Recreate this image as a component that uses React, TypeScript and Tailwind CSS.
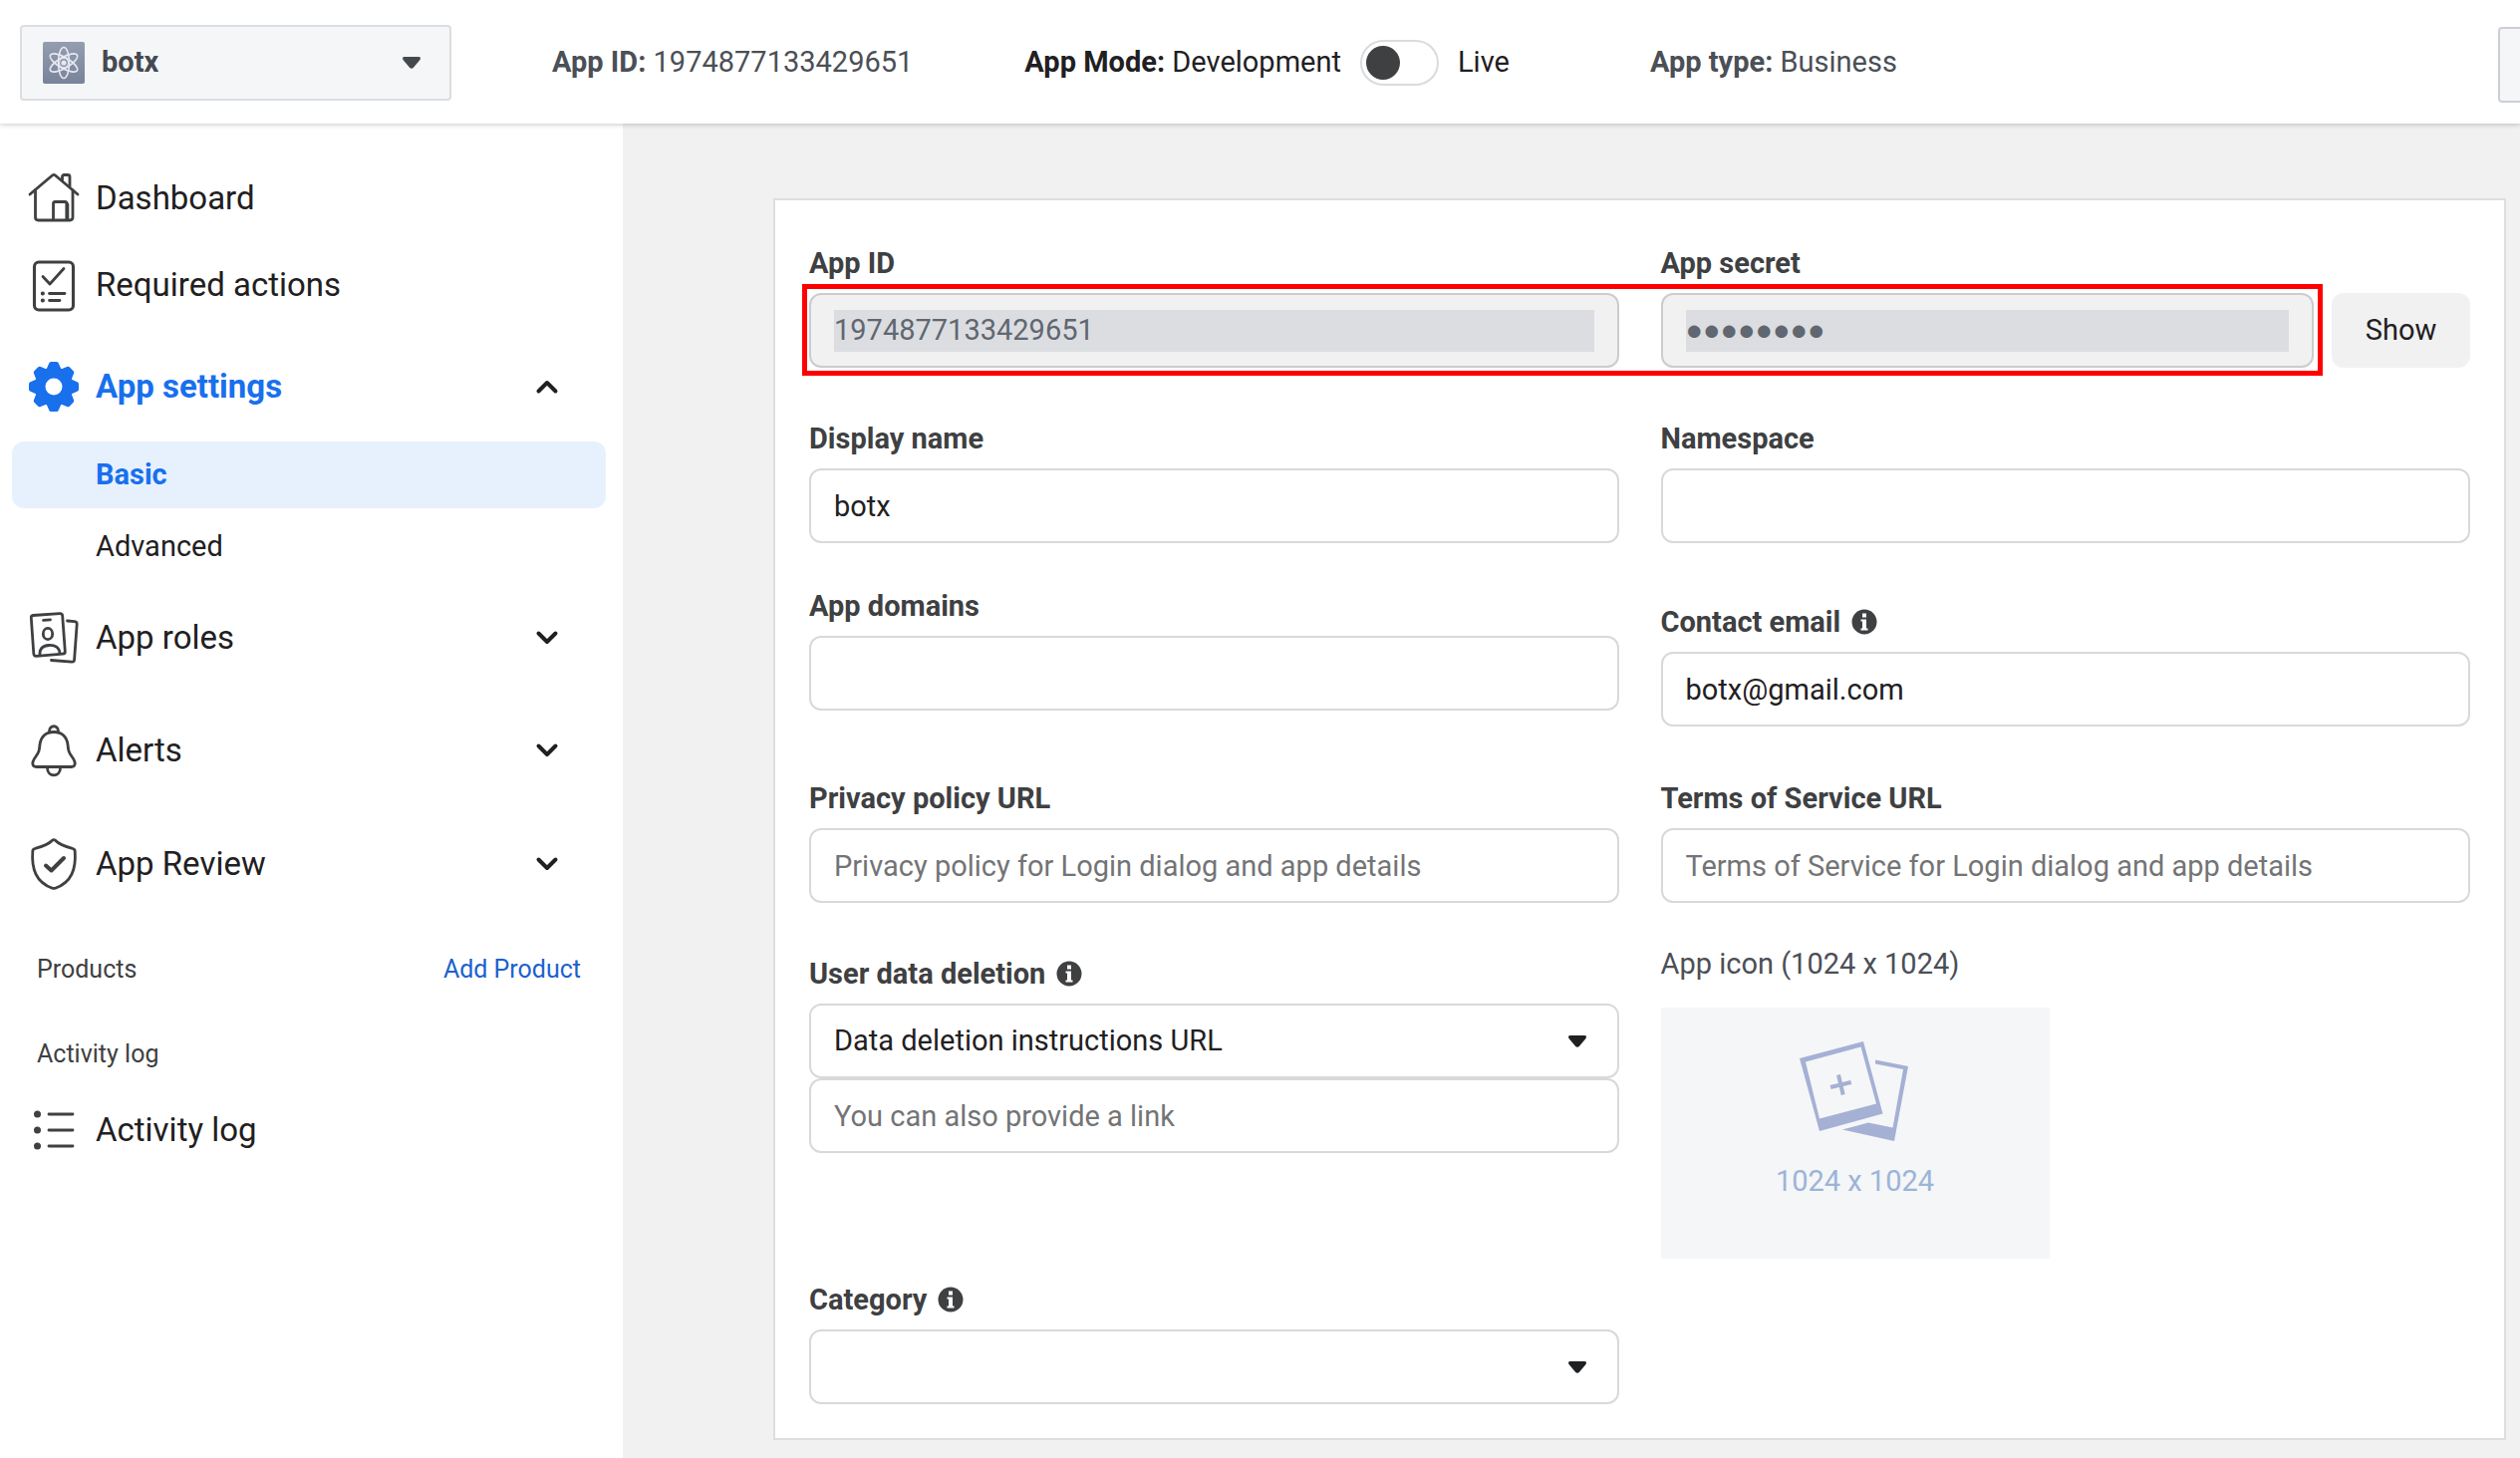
import React from "react";

const ink = "#3e4042";

function AtomIcon() {
  return (
    <svg viewBox="0 0 42 42" className="size-[42px] shrink-0" aria-hidden="true">
      <defs>
        <linearGradient id="atomBg" x1="0" y1="0" x2="0" y2="1">
          <stop offset="0" stopColor="#949db0" />
          <stop offset="1" stopColor="#78829a" />
        </linearGradient>
      </defs>
      <rect width="42" height="42" rx="2" fill="url(#atomBg)" />
      <g fill="none" stroke="#e6e9f0" strokeWidth="1.6">
        <ellipse cx="21" cy="21" rx="5.5" ry="15.5" />
        <ellipse cx="21" cy="21" rx="5.5" ry="15.5" transform="rotate(60 21 21)" />
        <ellipse cx="21" cy="21" rx="5.5" ry="15.5" transform="rotate(120 21 21)" />
        <circle cx="21" cy="21" r="4.5" strokeWidth="1.2" />
      </g>
      <circle cx="21" cy="21" r="2.6" fill="#e6e9f0" />
    </svg>
  );
}

function Icon({ children }: { children: React.ReactNode }) {
  return (
    <svg
      viewBox="0 0 54 54"
      className="size-[54px] shrink-0"
      fill="none"
      stroke={ink}
      strokeWidth="2.8"
      strokeLinecap="round"
      strokeLinejoin="round"
      aria-hidden="true"
    >
      {children}
    </svg>
  );
}

const HouseIcon = () => (
  <Icon>
    <path d="M3 23 25.500 4Q27 2.800 28.500 4L51 23" />
    <path d="M8.500 19V46Q8.500 49 11.500 49H43Q46 49 46 46V19" />
    <path d="M35.500 9V5.500Q35.500 3.500 37.500 3.500H41Q43 3.500 43 5.500V15" />
    <path d="M26.500 48V32.500Q26.500 30.500 28.500 30.500H38Q40 30.500 40 32.500V48" />
    <path d="M40.500 33V48" strokeWidth="3.600" />
  </Icon>
);

const ChecklistIcon = () => (
  <Icon>
    <rect x="7.500" y="4" width="39" height="48" rx="4.500" strokeWidth="3.100" />
    <path d="M16 18.500 23 26 37 10.500" />
    <path d="M22.500 35.500H38M22.500 42.500H33" />
    <path d="M15.700 35.500h.3M15.700 42.500h.3" strokeWidth="3.800" />
  </Icon>
);

const GearIcon = () => (
  <svg viewBox="-27 -27 54 54" className="size-[54px] shrink-0" aria-hidden="true">
    <g fill="#1870ed">
      {[0, 45, 90, 135, 180, 225, 270, 315].map((a) => (
        <path
          key={a}
          transform={`rotate(${a})`}
          d="M-8.500 -15 L-4.800 -23.500 Q-4.300 -25 -2.800 -25 H2.800 Q4.300 -25 4.800 -23.500 L8.500 -15 Z"
        />
      ))}
    </g>
    <circle r="14" fill="none" stroke="#1870ed" strokeWidth="11" />
  </svg>
);

const RolesIcon = () => (
  <Icon>
    <path d="M6 4.500 33 2.600Q35.500 2.500 35.700 5L38.300 40.500Q38.500 43 36 43.200L9.500 45.300Q7 45.500 6.800 43L4.300 7Q4.200 4.700 6 4.500Z" />
    <path d="M40.500 10 48 10.700Q50.300 11 50.200 13.200L47.600 49Q47.400 51.300 45 51.200L24.500 49.500" />
    <path d="M16.500 9.300 23.500 8.800" />
    <ellipse cx="21" cy="23" rx="4.700" ry="5.600" />
    <path d="M13 44.500C12.500 38 15.500 35 22 34.500S32.500 37 33 42.500" />
  </Icon>
);

const BellIcon = () => (
  <Icon>
    <path d="M22.500 8C22.500 1 31.500 1 31.500 8" />
    <path d="M27 8.500C18.500 8.500 14 14 13 21C12.300 27 12.500 28 9 33C6 37 5.500 38 5.800 40.500C6 42.800 7 43.500 9.500 43.500H44.500C47 43.500 48 42.800 48.200 40.500C48.500 38 48 37 45 33C41.500 28 41.700 27 41 21C40 14 35.500 8.500 27 8.500Z" />
    <path d="M20.500 44.500C20.500 54.300 33.500 54.300 33.500 44.500" />
  </Icon>
);

const ShieldIcon = () => (
  <Icon>
    <path d="M25.500 3.200Q27 2.200 28.500 3.200C33 8 39 9.500 46 11.500Q48 12 48.200 14C49.500 32 45 45 28.500 51.200Q27 51.700 25.500 51.200C9 45 4.500 32 5.800 14Q6 12 8 11.500C15 9.500 21 8 25.500 3.200Z" />
    <path d="M19 28.500 24.500 33.500 37 21" strokeWidth="4" />
  </Icon>
);

const ListIcon = () => (
  <Icon>
    <path d="M22 11H46M22 27H46M22 43H46" />
    <g fill={ink} stroke="none">
      <circle cx="10.500" cy="11" r="3.500" />
      <circle cx="10.500" cy="27" r="3.500" />
      <circle cx="10.500" cy="43" r="3.500" />
    </g>
  </Icon>
);

function Chevron({ up = false }: { up?: boolean }) {
  return (
    <svg viewBox="0 0 24 24" className="size-6" fill="none" stroke="#1f2022" strokeWidth="4" strokeLinecap="round" strokeLinejoin="round" aria-hidden="true">
      <path d={up ? "M3.500 16.500 12 8l8.500 8.500" : "M3.500 7.500 12 16l8.500-8.500"} />
    </svg>
  );
}

function Caret() {
  return (
    <svg viewBox="0 0 20 14" className="h-[14px] w-5" aria-hidden="true">
      <path d="M3 1H17Q20 1 18.500 4L12 11.700Q10 14 8 11.700L1.500 4Q0 1 3 1Z" fill="currentColor" />
    </svg>
  );
}

function InfoIcon() {
  return (
    <svg viewBox="0 0 26 26" className="size-[26px]" aria-hidden="true">
      <circle cx="13" cy="13" r="12.500" fill={ink} />
      <path d="M11 4.500h4v4h-4zM9.500 10.500H15v9h1.500v2h-7v-2H11v-7H9.500z" fill="#fff" />
    </svg>
  );
}

function PhotosIcon() {
  return (
    <svg viewBox="0 0 112 102" className="h-[102px] w-[112px]" aria-hidden="true">
      <path d="M76 19.500 109 26 95 101 43 89.500 69 82.500 93.500 87.500 104 29 76 23.500Z" fill="#a5b0d5" />
      <path fillRule="evenodd" d="M0 18 64 1 83.500 73.500 20 91ZM6 21.500 20 78.500 77 63.500 61.500 6.500Z" fill="#a5b0d5" />
      <path d="M39 34.500 43.700 54.500M31 47 51.700 42" stroke="#a5b0d5" strokeWidth="4" />
    </svg>
  );
}

const field =
  "h-[75px] w-full rounded-[12px] border-2 border-[#d8d9db] bg-white px-[23px] text-[29px] text-[#1f2022] placeholder:text-[#737476] outline-none";

function Label({ htmlFor, children, info = false }: { htmlFor: string; children: string; info?: boolean }) {
  return (
    <div className="mb-3 flex h-9 items-center gap-[11px]">
      <label htmlFor={htmlFor} className="text-[29px] leading-9 font-bold text-[#3e4042]">
        {children}
      </label>
      {info && (
        <button type="button" aria-label={`About ${children}`}>
          <InfoIcon />
        </button>
      )}
    </div>
  );
}

function TextField({ id, label, info, value, placeholder, className = "" }: {
  id: string;
  label: string;
  info?: boolean;
  value?: string;
  placeholder?: string;
  className?: string;
}) {
  return (
    <div className={className}>
      <Label htmlFor={id} info={info}>{label}</Label>
      <input id={id} type="text" defaultValue={value} placeholder={placeholder} className={field} />
    </div>
  );
}

function SelectBox({ id, options }: { id: string; options: string[] }) {
  return (
    <div className="relative">
      <select id={id} className={`${field} block appearance-none`}>
        {options.map((o) => (
          <option key={o}>{o}</option>
        ))}
      </select>
      <span className="pointer-events-none absolute inset-y-0 right-8 flex items-center text-[#1f2022]">
        <Caret />
      </span>
    </div>
  );
}

const locked = "flex h-[75px] min-w-0 flex-1 items-center rounded-[12px] border-2 border-[#cbccce] bg-[#f1f1f1] px-[23px]";
const lockedInput = "h-[42px] w-full min-w-0 bg-[#dcdde1] text-[29px] text-[#606770] outline-none";

function NavLink({ icon, children, className = "" }: { icon: React.ReactNode; children: string; className?: string }) {
  return (
    <a href="#" className={`flex h-[54px] items-center gap-[15px] pl-[27px] text-[33px] text-[#1f2022] ${className}`}>
      {icon}
      {children}
    </a>
  );
}

function NavGroup({ icon, children, open = false, className = "" }: {
  icon: React.ReactNode;
  children: string;
  open?: boolean;
  className?: string;
}) {
  return (
    <button
      type="button"
      aria-expanded={open}
      className={`flex h-[54px] items-center gap-[15px] pr-16 pl-[27px] text-left text-[33px] ${open ? "font-bold text-[#1870ed]" : "text-[#1f2022]"} ${className}`}
    >
      {icon}
      <span className="flex-1">{children}</span>
      <Chevron up={open} />
    </button>
  );
}

export default function App() {
  return (
    <div className="flex min-h-screen flex-col overflow-hidden bg-[#f1f1f1] font-[Roboto,sans-serif]">
      <header className="relative z-10 flex h-[124px] items-center bg-white pt-[2px] pl-5 text-[29px] shadow-[0_1px_5px_rgba(0,0,0,0.22)]">
        <button type="button" className="flex h-[76px] w-[433px] shrink-0 items-center gap-[17px] rounded-[4px] border-2 border-[#dadde1] bg-[#f5f6f7] pr-7 pl-[21px] text-[#444950]">
          <AtomIcon />
          <span className="flex-1 text-left font-bold">botx</span>
          <Caret />
        </button>
        <p className="ml-[101px] whitespace-nowrap text-[#4b4f56]">
          <b>App ID:</b> 1974877133429651
        </p>
        <div className="ml-[112px] flex items-center gap-[19px] whitespace-nowrap text-[#1f2022]">
          <span>
            <b>App Mode:</b> Development
          </span>
          <button type="button" role="switch" aria-checked="false" aria-label="App mode" className="flex h-[46px] w-[79px] items-center rounded-full border-2 border-[#dadbdd] bg-white px-1">
            <span className="size-[34px] rounded-full bg-[#3e4042]" />
          </button>
          <span>Live</span>
        </div>
        <p className="ml-[141px] whitespace-nowrap text-[#4b4f56]">
          <b>App type:</b> Business
        </p>
        <button type="button" aria-label="More" className="mt-1 -mr-9 ml-auto h-[76px] w-[58px] shrink-0 rounded-[4px] border-2 border-[#ccd0d5] bg-[#f5f6f7]" />
      </header>

      <div className="flex flex-1">
        <nav className="flex w-[625px] shrink-0 flex-col bg-white pt-12">
          <NavLink icon={<HouseIcon />}>Dashboard</NavLink>
          <NavLink icon={<ChecklistIcon />} className="mt-[33px]">Required actions</NavLink>
          <NavGroup icon={<GearIcon />} open className="mt-12">App settings</NavGroup>
          <a href="#" className="mx-3 mt-7 mr-[17px] flex h-[67px] items-center rounded-[12px] bg-[#e7f1fe] pl-[84px] text-[29px] font-bold text-[#1870ed]">
            Basic
          </a>
          <a href="#" className="mx-3 mt-[5px] flex h-[67px] items-center pl-[84px] text-[29px] text-[#1f2022]">
            Advanced
          </a>
          <NavGroup icon={<RolesIcon />} className="mt-[31px]">App roles</NavGroup>
          <NavGroup icon={<BellIcon />} className="mt-[59px]">Alerts</NavGroup>
          <NavGroup icon={<ShieldIcon />} className="mt-[60px]">App Review</NavGroup>
          <div className="mt-[61px] flex h-9 items-center justify-between pr-[42px] pl-[37px] text-[25px] text-[#3e4042]">
            <h2>Products</h2>
            <a href="#" className="text-[#1b61cf]">Add Product</a>
          </div>
          <h2 className="mt-[49px] pl-[37px] text-[25px] leading-9 text-[#3e4042]">Activity log</h2>
          <NavLink icon={<ListIcon />} className="mt-[31px]">Activity log</NavLink>
        </nav>

        <main className="min-w-0 flex-1 pt-[75px] pr-[14px] pl-[151px]">
          <form className="border-2 border-[#dcdee1] bg-white px-[34px] pt-[45px] pb-[34px]">
            <div className="relative grid grid-cols-2 gap-x-[42px]">
              <div className="flex flex-col">
                <div>
                  <Label htmlFor="app-id">App ID</Label>
                  <div className={locked}>
                    <input id="app-id" readOnly value="1974877133429651" className={lockedInput} />
                  </div>
                </div>
                <TextField id="display-name" label="Display name" value="botx" className="mt-[53px]" />
                <TextField id="domains" label="App domains" className="mt-[45px]" />
                <TextField id="privacy" label="Privacy policy URL" placeholder="Privacy policy for Login dialog and app details" className="mt-[70px]" />
                <div className="mt-[53px]">
                  <Label htmlFor="deletion" info>User data deletion</Label>
                  <SelectBox id="deletion" options={["Data deletion instructions URL", "Data deletion callback URL"]} />
                  <input type="text" aria-label="Data deletion link" placeholder="You can also provide a link" className={`${field} block`} />
                </div>
                <div className="mt-[129px]">
                  <Label htmlFor="category" info>Category</Label>
                  <SelectBox id="category" options={[""]} />
                </div>
              </div>

              <div className="flex flex-col">
                <div>
                  <Label htmlFor="secret">App secret</Label>
                  <div className="flex gap-[18px]">
                    <div className={locked}>
                      <input id="secret" readOnly value="●●●●●●●●" className={lockedInput} />
                    </div>
                    <button type="button" className="h-[75px] w-[139px] rounded-[12px] bg-[#f1f1f1] text-[29px] text-[#1f2022]">
                      Show
                    </button>
                  </div>
                </div>
                <TextField id="namespace" label="Namespace" className="mt-[53px]" />
                <TextField id="email" label="Contact email" info value="botx@gmail.com" className="mt-[61px]" />
                <TextField id="terms" label="Terms of Service URL" placeholder="Terms of Service for Login dialog and app details" className="mt-[54px]" />
                <div className="mt-[43px]">
                  <p className="mb-[26px] text-[29px] leading-9 text-[#4b4f56]">App icon (1024 x 1024)</p>
                  <button type="button" className="flex h-[252px] w-[390px] flex-col items-center bg-[#f5f6f7] pt-[33px] text-[29px] text-[#9cb4d8]">
                    <PhotosIcon />
                    <span className="mt-[21px] leading-9">1024 x 1024</span>
                  </button>
                </div>
              </div>

              <div className="pointer-events-none absolute top-[39px] right-[148px] -left-[7px] h-[92px] border-[5px] border-[#ff0000]" />
            </div>
          </form>
        </main>
      </div>
    </div>
  );
}
